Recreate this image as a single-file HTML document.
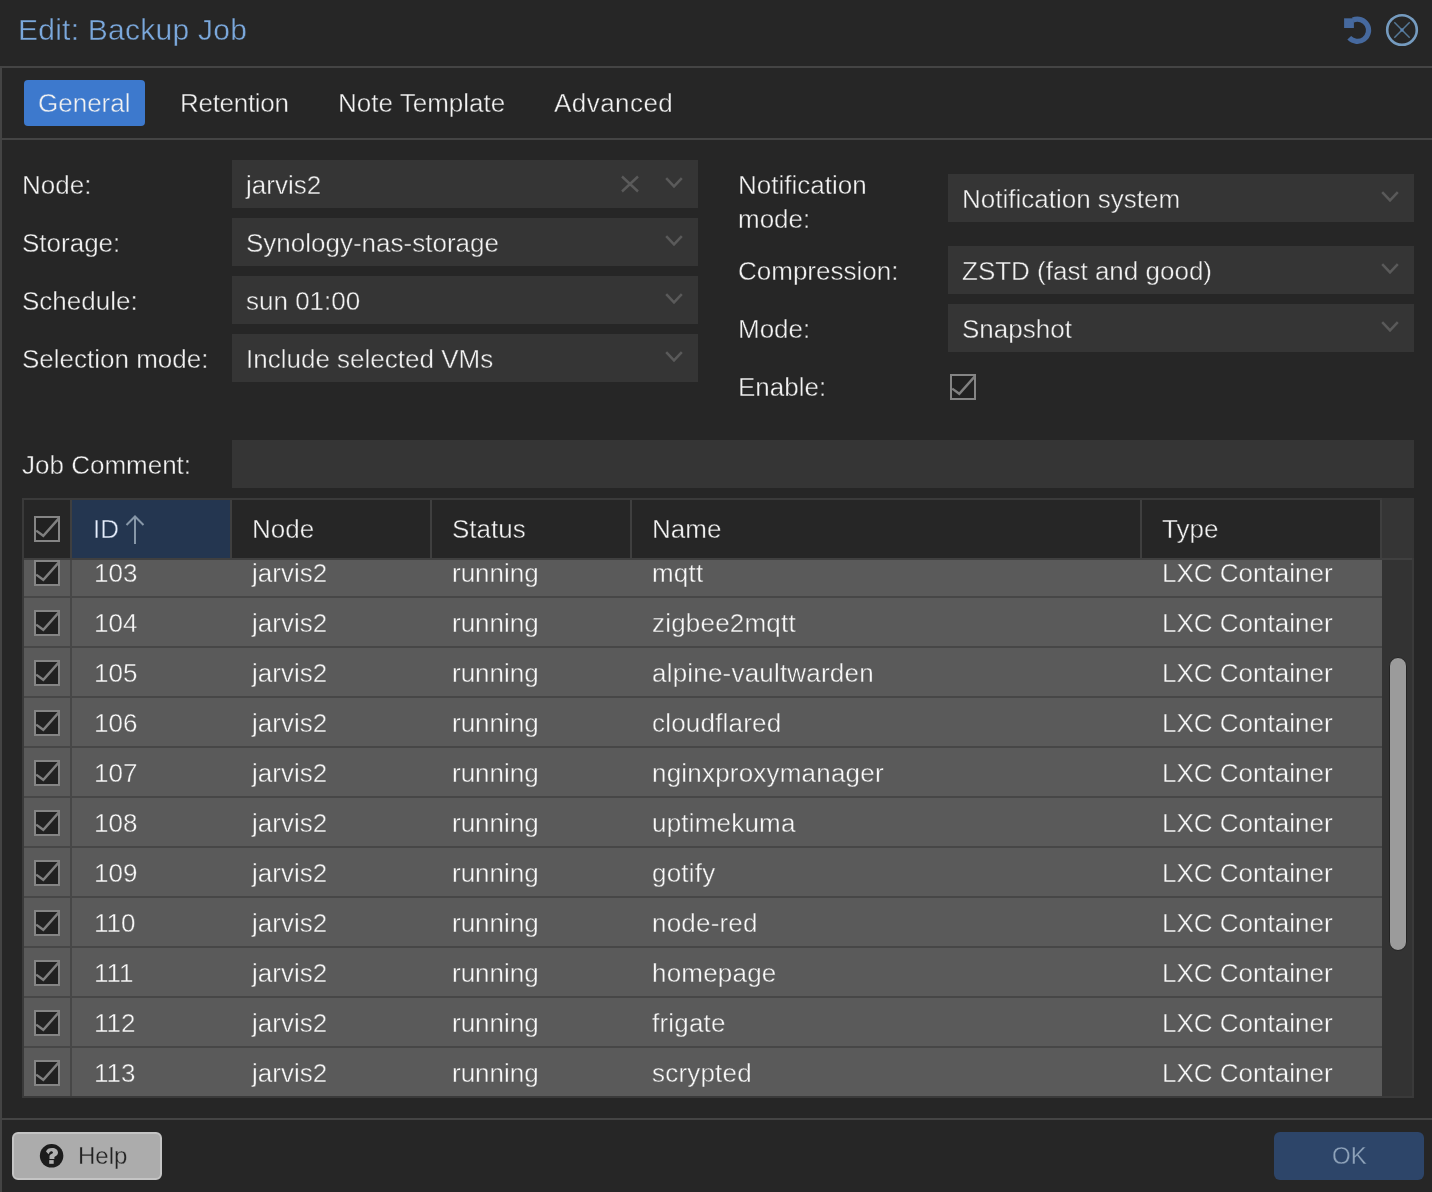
<!DOCTYPE html>
<html><head><meta charset="utf-8"><style>
html,body{margin:0;padding:0;}
body{width:1432px;height:1192px;overflow:hidden;background:#262626;position:relative;font-family:"Liberation Sans",sans-serif;color:#f2f2f2;}
.t{position:absolute;white-space:nowrap;will-change:transform;}
.b{position:absolute;}
.fld{position:absolute;background:#353535;}
svg{display:block;}
</style></head><body>

<div class="t" style="left:18px;top:13px;font-size:30px;line-height:34px;color:#7ba8dc;-webkit-text-stroke:0.4px #262626;letter-spacing:0.25px;">Edit: Backup Job</div>
<svg class="b" style="left:1340px;top:12px" width="36" height="36" viewBox="0 0 36 36"><path d="M13.04 7.99 A 11.15 11.15 0 1 1 9.25 25.85" fill="none" stroke="#46699e" stroke-width="5.2"/><polygon points="4.1,6.3 13.9,6.3 13.9,16 4.1,16" fill="#46699e"/></svg>
<svg class="b" style="left:1384px;top:12px" width="36" height="36" viewBox="0 0 36 36"><circle cx="18" cy="18" r="14.8" fill="none" stroke="#759bbf" stroke-width="2.6"/><path d="M10.3 10.3 L25.7 25.7 M25.7 10.3 L10.3 25.7" stroke="#557896" stroke-width="1.5"/><rect x="16.5" y="16.5" width="3" height="3" fill="#5a84b3"/></svg>
<div class="b" style="left:0;top:66px;width:1432px;height:2px;background:#444"></div>
<div class="b" style="left:0;top:66px;width:2px;height:1126px;background:#444"></div>
<div class="b" style="left:2px;top:138px;width:1430px;height:2px;background:#444"></div>
<div class="b" style="left:2px;top:1118px;width:1430px;height:2px;background:#444"></div>
<div class="b" style="left:24px;top:80px;width:121px;height:46px;background:#3d79cd;border-radius:4px"></div>
<div class="t" style="left:38px;top:88px;font-size:26px;line-height:30px;color:#f2f2f2;-webkit-text-stroke:0.4px #3d79cd;">General</div>
<div class="t" style="left:180px;top:88px;font-size:26px;line-height:30px;color:#f2f2f2;-webkit-text-stroke:0.4px #262626;letter-spacing:-0.3px;">Retention</div>
<div class="t" style="left:338px;top:88px;font-size:26px;line-height:30px;color:#f2f2f2;-webkit-text-stroke:0.4px #262626;">Note Template</div>
<div class="t" style="left:554px;top:88px;font-size:26px;line-height:30px;color:#f2f2f2;-webkit-text-stroke:0.4px #262626;letter-spacing:0.45px;">Advanced</div>
<div class="t" style="left:22px;top:170px;font-size:26px;line-height:30px;-webkit-text-stroke:0.4px #262626;">Node:</div>
<div class="fld" style="left:232px;top:160px;width:466px;height:48px"></div>
<div class="t" style="left:246px;top:170px;font-size:26px;line-height:30px;-webkit-text-stroke:0.4px #353535;">jarvis2</div>
<div class="b" style="left:665px;top:177px"><svg width="18" height="12" viewBox="0 0 18 12"><polyline points="1.2,1.2 9,9.4 16.8,1.2" fill="none" stroke="#5a5a5a" stroke-width="2.5"/></svg></div>
<div class="t" style="left:22px;top:228px;font-size:26px;line-height:30px;-webkit-text-stroke:0.4px #262626;">Storage:</div>
<div class="fld" style="left:232px;top:218px;width:466px;height:48px"></div>
<div class="t" style="left:246px;top:228px;font-size:26px;line-height:30px;-webkit-text-stroke:0.4px #353535;">Synology-nas-storage</div>
<div class="b" style="left:665px;top:235px"><svg width="18" height="12" viewBox="0 0 18 12"><polyline points="1.2,1.2 9,9.4 16.8,1.2" fill="none" stroke="#5a5a5a" stroke-width="2.5"/></svg></div>
<div class="t" style="left:22px;top:286px;font-size:26px;line-height:30px;-webkit-text-stroke:0.4px #262626;">Schedule:</div>
<div class="fld" style="left:232px;top:276px;width:466px;height:48px"></div>
<div class="t" style="left:246px;top:286px;font-size:26px;line-height:30px;-webkit-text-stroke:0.4px #353535;">sun 01:00</div>
<div class="b" style="left:665px;top:293px"><svg width="18" height="12" viewBox="0 0 18 12"><polyline points="1.2,1.2 9,9.4 16.8,1.2" fill="none" stroke="#5a5a5a" stroke-width="2.5"/></svg></div>
<div class="t" style="left:22px;top:344px;font-size:26px;line-height:30px;-webkit-text-stroke:0.4px #262626;">Selection mode:</div>
<div class="fld" style="left:232px;top:334px;width:466px;height:48px"></div>
<div class="t" style="left:246px;top:344px;font-size:26px;line-height:30px;-webkit-text-stroke:0.4px #353535;">Include selected VMs</div>
<div class="b" style="left:665px;top:351px"><svg width="18" height="12" viewBox="0 0 18 12"><polyline points="1.2,1.2 9,9.4 16.8,1.2" fill="none" stroke="#5a5a5a" stroke-width="2.5"/></svg></div>
<svg class="b" style="left:620px;top:175px" width="20" height="20" viewBox="0 0 20 20"><path d="M2 1.5 L18 16.5 M18 1.5 L2 16.5" stroke="#5a5a5a" stroke-width="2.4"/></svg>
<div class="t" style="left:738px;top:170px;font-size:26px;line-height:30px;-webkit-text-stroke:0.4px #262626;">Notification</div>
<div class="t" style="left:738px;top:204px;font-size:26px;line-height:30px;-webkit-text-stroke:0.4px #262626;">mode:</div>
<div class="fld" style="left:948px;top:174px;width:466px;height:48px"></div>
<div class="t" style="left:962px;top:184px;font-size:26px;line-height:30px;-webkit-text-stroke:0.4px #353535;">Notification system</div>
<div class="b" style="left:1381px;top:191px"><svg width="18" height="12" viewBox="0 0 18 12"><polyline points="1.2,1.2 9,9.4 16.8,1.2" fill="none" stroke="#5a5a5a" stroke-width="2.5"/></svg></div>
<div class="t" style="left:738px;top:256px;font-size:26px;line-height:30px;-webkit-text-stroke:0.4px #262626;">Compression:</div>
<div class="fld" style="left:948px;top:246px;width:466px;height:48px"></div>
<div class="t" style="left:962px;top:256px;font-size:26px;line-height:30px;-webkit-text-stroke:0.4px #353535;">ZSTD (fast and good)</div>
<div class="b" style="left:1381px;top:263px"><svg width="18" height="12" viewBox="0 0 18 12"><polyline points="1.2,1.2 9,9.4 16.8,1.2" fill="none" stroke="#5a5a5a" stroke-width="2.5"/></svg></div>
<div class="t" style="left:738px;top:314px;font-size:26px;line-height:30px;-webkit-text-stroke:0.4px #262626;">Mode:</div>
<div class="fld" style="left:948px;top:304px;width:466px;height:48px"></div>
<div class="t" style="left:962px;top:314px;font-size:26px;line-height:30px;-webkit-text-stroke:0.4px #353535;">Snapshot</div>
<div class="b" style="left:1381px;top:321px"><svg width="18" height="12" viewBox="0 0 18 12"><polyline points="1.2,1.2 9,9.4 16.8,1.2" fill="none" stroke="#5a5a5a" stroke-width="2.5"/></svg></div>
<div class="t" style="left:738px;top:372px;font-size:26px;line-height:30px;-webkit-text-stroke:0.4px #262626;">Enable:</div>
<div class="b" style="left:950px;top:374px"><svg width="26" height="26" viewBox="0 0 26 26"><rect x="1" y="1" width="24" height="24" fill="#212121" stroke="#858585" stroke-width="2"/><polyline points="2.2,14.6 9.3,19.8 24.6,2.6" fill="none" stroke="#808080" stroke-width="2.4"/></svg></div>
<div class="t" style="left:22px;top:450px;font-size:26px;line-height:30px;-webkit-text-stroke:0.4px #262626;">Job Comment:</div>
<div class="fld" style="left:232px;top:440px;width:1182px;height:48px"></div>
<div class="b" style="left:22px;top:498px;width:1392px;height:600px;background:#3a3a3a"></div>
<div class="b" style="left:24px;top:500px;width:1388px;height:58px;background:#262626"></div>
<div class="b" style="left:72px;top:500px;width:158px;height:58px;background:#243650"></div>
<div class="b" style="left:70px;top:500px;width:2px;height:58px;background:#3f3f3f"></div>
<div class="b" style="left:230px;top:500px;width:2px;height:58px;background:#3f3f3f"></div>
<div class="b" style="left:430px;top:500px;width:2px;height:58px;background:#3f3f3f"></div>
<div class="b" style="left:630px;top:500px;width:2px;height:58px;background:#3f3f3f"></div>
<div class="b" style="left:1140px;top:500px;width:2px;height:58px;background:#3f3f3f"></div>
<div class="b" style="left:1380px;top:500px;width:2px;height:58px;background:#3f3f3f"></div>
<div class="b" style="left:1382px;top:498px;width:32px;height:60px;background:#353535"></div>
<div class="b" style="left:24px;top:558px;width:1388px;height:2px;background:#404040"></div>
<div class="b" style="left:34px;top:516px"><svg width="26" height="26" viewBox="0 0 26 26"><rect x="1" y="1" width="24" height="24" fill="#212121" stroke="#858585" stroke-width="2"/><polyline points="2.2,14.6 9.3,19.8 24.6,2.6" fill="none" stroke="#808080" stroke-width="2.4"/></svg></div>
<div class="t" style="left:93px;top:514px;font-size:26px;line-height:30px;color:#e6eefc;-webkit-text-stroke:0.4px #243650;">ID</div>
<svg class="b" style="left:124px;top:514px" width="22" height="32" viewBox="0 0 22 32"><path d="M11 3 L11 30 M2.5 11 L11 2.5 L19.5 11" fill="none" stroke="#8797a8" stroke-width="2"/></svg>
<div class="t" style="left:252px;top:514px;font-size:26px;line-height:30px;-webkit-text-stroke:0.4px #262626;">Node</div>
<div class="t" style="left:452px;top:514px;font-size:26px;line-height:30px;-webkit-text-stroke:0.4px #262626;">Status</div>
<div class="t" style="left:652px;top:514px;font-size:26px;line-height:30px;-webkit-text-stroke:0.4px #262626;">Name</div>
<div class="t" style="left:1162px;top:514px;font-size:26px;line-height:30px;-webkit-text-stroke:0.4px #262626;">Type</div>
<div class="b" style="left:24px;top:560px;width:1388px;height:536px;overflow:hidden">
<div class="b" style="left:1358px;top:0;width:30px;height:536px;background:#333"></div>
<div class="b" style="left:0;top:-12px;width:1358px;height:48px;background:#5a5a5a"></div>
<div class="b" style="left:0;top:36px;width:1358px;height:2px;background:#474747"></div>
<div class="b" style="left:46px;top:-12px;width:2px;height:48px;background:#474747"></div>
<div class="b" style="left:10px;top:0px"><svg width="26" height="26" viewBox="0 0 26 26"><rect x="1" y="1" width="24" height="24" fill="#212121" stroke="#858585" stroke-width="2"/><polyline points="2.2,14.6 9.3,19.8 24.6,2.6" fill="none" stroke="#808080" stroke-width="2.4"/></svg></div>
<div class="t" style="left:70px;top:-2px;font-size:26px;line-height:30px;color:#f8f8f8;-webkit-text-stroke:0.4px #5a5a5a;">103</div>
<div class="t" style="left:228px;top:-2px;font-size:26px;line-height:30px;color:#f8f8f8;-webkit-text-stroke:0.4px #5a5a5a;">jarvis2</div>
<div class="t" style="left:428px;top:-2px;font-size:26px;line-height:30px;color:#f8f8f8;-webkit-text-stroke:0.4px #5a5a5a;">running</div>
<div class="t" style="left:628px;top:-2px;font-size:26px;line-height:30px;color:#f8f8f8;-webkit-text-stroke:0.4px #5a5a5a;letter-spacing:0.2px;">mqtt</div>
<div class="t" style="left:1138px;top:-2px;font-size:26px;line-height:30px;color:#f8f8f8;-webkit-text-stroke:0.4px #5a5a5a;">LXC Container</div>
<div class="b" style="left:0;top:38px;width:1358px;height:48px;background:#5a5a5a"></div>
<div class="b" style="left:0;top:86px;width:1358px;height:2px;background:#474747"></div>
<div class="b" style="left:46px;top:38px;width:2px;height:48px;background:#474747"></div>
<div class="b" style="left:10px;top:50px"><svg width="26" height="26" viewBox="0 0 26 26"><rect x="1" y="1" width="24" height="24" fill="#212121" stroke="#858585" stroke-width="2"/><polyline points="2.2,14.6 9.3,19.8 24.6,2.6" fill="none" stroke="#808080" stroke-width="2.4"/></svg></div>
<div class="t" style="left:70px;top:48px;font-size:26px;line-height:30px;color:#f8f8f8;-webkit-text-stroke:0.4px #5a5a5a;">104</div>
<div class="t" style="left:228px;top:48px;font-size:26px;line-height:30px;color:#f8f8f8;-webkit-text-stroke:0.4px #5a5a5a;">jarvis2</div>
<div class="t" style="left:428px;top:48px;font-size:26px;line-height:30px;color:#f8f8f8;-webkit-text-stroke:0.4px #5a5a5a;">running</div>
<div class="t" style="left:628px;top:48px;font-size:26px;line-height:30px;color:#f8f8f8;-webkit-text-stroke:0.4px #5a5a5a;letter-spacing:0.2px;">zigbee2mqtt</div>
<div class="t" style="left:1138px;top:48px;font-size:26px;line-height:30px;color:#f8f8f8;-webkit-text-stroke:0.4px #5a5a5a;">LXC Container</div>
<div class="b" style="left:0;top:88px;width:1358px;height:48px;background:#5a5a5a"></div>
<div class="b" style="left:0;top:136px;width:1358px;height:2px;background:#474747"></div>
<div class="b" style="left:46px;top:88px;width:2px;height:48px;background:#474747"></div>
<div class="b" style="left:10px;top:100px"><svg width="26" height="26" viewBox="0 0 26 26"><rect x="1" y="1" width="24" height="24" fill="#212121" stroke="#858585" stroke-width="2"/><polyline points="2.2,14.6 9.3,19.8 24.6,2.6" fill="none" stroke="#808080" stroke-width="2.4"/></svg></div>
<div class="t" style="left:70px;top:98px;font-size:26px;line-height:30px;color:#f8f8f8;-webkit-text-stroke:0.4px #5a5a5a;">105</div>
<div class="t" style="left:228px;top:98px;font-size:26px;line-height:30px;color:#f8f8f8;-webkit-text-stroke:0.4px #5a5a5a;">jarvis2</div>
<div class="t" style="left:428px;top:98px;font-size:26px;line-height:30px;color:#f8f8f8;-webkit-text-stroke:0.4px #5a5a5a;">running</div>
<div class="t" style="left:628px;top:98px;font-size:26px;line-height:30px;color:#f8f8f8;-webkit-text-stroke:0.4px #5a5a5a;letter-spacing:0.2px;">alpine-vaultwarden</div>
<div class="t" style="left:1138px;top:98px;font-size:26px;line-height:30px;color:#f8f8f8;-webkit-text-stroke:0.4px #5a5a5a;">LXC Container</div>
<div class="b" style="left:0;top:138px;width:1358px;height:48px;background:#5a5a5a"></div>
<div class="b" style="left:0;top:186px;width:1358px;height:2px;background:#474747"></div>
<div class="b" style="left:46px;top:138px;width:2px;height:48px;background:#474747"></div>
<div class="b" style="left:10px;top:150px"><svg width="26" height="26" viewBox="0 0 26 26"><rect x="1" y="1" width="24" height="24" fill="#212121" stroke="#858585" stroke-width="2"/><polyline points="2.2,14.6 9.3,19.8 24.6,2.6" fill="none" stroke="#808080" stroke-width="2.4"/></svg></div>
<div class="t" style="left:70px;top:148px;font-size:26px;line-height:30px;color:#f8f8f8;-webkit-text-stroke:0.4px #5a5a5a;">106</div>
<div class="t" style="left:228px;top:148px;font-size:26px;line-height:30px;color:#f8f8f8;-webkit-text-stroke:0.4px #5a5a5a;">jarvis2</div>
<div class="t" style="left:428px;top:148px;font-size:26px;line-height:30px;color:#f8f8f8;-webkit-text-stroke:0.4px #5a5a5a;">running</div>
<div class="t" style="left:628px;top:148px;font-size:26px;line-height:30px;color:#f8f8f8;-webkit-text-stroke:0.4px #5a5a5a;letter-spacing:0.2px;">cloudflared</div>
<div class="t" style="left:1138px;top:148px;font-size:26px;line-height:30px;color:#f8f8f8;-webkit-text-stroke:0.4px #5a5a5a;">LXC Container</div>
<div class="b" style="left:0;top:188px;width:1358px;height:48px;background:#5a5a5a"></div>
<div class="b" style="left:0;top:236px;width:1358px;height:2px;background:#474747"></div>
<div class="b" style="left:46px;top:188px;width:2px;height:48px;background:#474747"></div>
<div class="b" style="left:10px;top:200px"><svg width="26" height="26" viewBox="0 0 26 26"><rect x="1" y="1" width="24" height="24" fill="#212121" stroke="#858585" stroke-width="2"/><polyline points="2.2,14.6 9.3,19.8 24.6,2.6" fill="none" stroke="#808080" stroke-width="2.4"/></svg></div>
<div class="t" style="left:70px;top:198px;font-size:26px;line-height:30px;color:#f8f8f8;-webkit-text-stroke:0.4px #5a5a5a;">107</div>
<div class="t" style="left:228px;top:198px;font-size:26px;line-height:30px;color:#f8f8f8;-webkit-text-stroke:0.4px #5a5a5a;">jarvis2</div>
<div class="t" style="left:428px;top:198px;font-size:26px;line-height:30px;color:#f8f8f8;-webkit-text-stroke:0.4px #5a5a5a;">running</div>
<div class="t" style="left:628px;top:198px;font-size:26px;line-height:30px;color:#f8f8f8;-webkit-text-stroke:0.4px #5a5a5a;letter-spacing:0.2px;">nginxproxymanager</div>
<div class="t" style="left:1138px;top:198px;font-size:26px;line-height:30px;color:#f8f8f8;-webkit-text-stroke:0.4px #5a5a5a;">LXC Container</div>
<div class="b" style="left:0;top:238px;width:1358px;height:48px;background:#5a5a5a"></div>
<div class="b" style="left:0;top:286px;width:1358px;height:2px;background:#474747"></div>
<div class="b" style="left:46px;top:238px;width:2px;height:48px;background:#474747"></div>
<div class="b" style="left:10px;top:250px"><svg width="26" height="26" viewBox="0 0 26 26"><rect x="1" y="1" width="24" height="24" fill="#212121" stroke="#858585" stroke-width="2"/><polyline points="2.2,14.6 9.3,19.8 24.6,2.6" fill="none" stroke="#808080" stroke-width="2.4"/></svg></div>
<div class="t" style="left:70px;top:248px;font-size:26px;line-height:30px;color:#f8f8f8;-webkit-text-stroke:0.4px #5a5a5a;">108</div>
<div class="t" style="left:228px;top:248px;font-size:26px;line-height:30px;color:#f8f8f8;-webkit-text-stroke:0.4px #5a5a5a;">jarvis2</div>
<div class="t" style="left:428px;top:248px;font-size:26px;line-height:30px;color:#f8f8f8;-webkit-text-stroke:0.4px #5a5a5a;">running</div>
<div class="t" style="left:628px;top:248px;font-size:26px;line-height:30px;color:#f8f8f8;-webkit-text-stroke:0.4px #5a5a5a;letter-spacing:0.2px;">uptimekuma</div>
<div class="t" style="left:1138px;top:248px;font-size:26px;line-height:30px;color:#f8f8f8;-webkit-text-stroke:0.4px #5a5a5a;">LXC Container</div>
<div class="b" style="left:0;top:288px;width:1358px;height:48px;background:#5a5a5a"></div>
<div class="b" style="left:0;top:336px;width:1358px;height:2px;background:#474747"></div>
<div class="b" style="left:46px;top:288px;width:2px;height:48px;background:#474747"></div>
<div class="b" style="left:10px;top:300px"><svg width="26" height="26" viewBox="0 0 26 26"><rect x="1" y="1" width="24" height="24" fill="#212121" stroke="#858585" stroke-width="2"/><polyline points="2.2,14.6 9.3,19.8 24.6,2.6" fill="none" stroke="#808080" stroke-width="2.4"/></svg></div>
<div class="t" style="left:70px;top:298px;font-size:26px;line-height:30px;color:#f8f8f8;-webkit-text-stroke:0.4px #5a5a5a;">109</div>
<div class="t" style="left:228px;top:298px;font-size:26px;line-height:30px;color:#f8f8f8;-webkit-text-stroke:0.4px #5a5a5a;">jarvis2</div>
<div class="t" style="left:428px;top:298px;font-size:26px;line-height:30px;color:#f8f8f8;-webkit-text-stroke:0.4px #5a5a5a;">running</div>
<div class="t" style="left:628px;top:298px;font-size:26px;line-height:30px;color:#f8f8f8;-webkit-text-stroke:0.4px #5a5a5a;letter-spacing:0.2px;">gotify</div>
<div class="t" style="left:1138px;top:298px;font-size:26px;line-height:30px;color:#f8f8f8;-webkit-text-stroke:0.4px #5a5a5a;">LXC Container</div>
<div class="b" style="left:0;top:338px;width:1358px;height:48px;background:#5a5a5a"></div>
<div class="b" style="left:0;top:386px;width:1358px;height:2px;background:#474747"></div>
<div class="b" style="left:46px;top:338px;width:2px;height:48px;background:#474747"></div>
<div class="b" style="left:10px;top:350px"><svg width="26" height="26" viewBox="0 0 26 26"><rect x="1" y="1" width="24" height="24" fill="#212121" stroke="#858585" stroke-width="2"/><polyline points="2.2,14.6 9.3,19.8 24.6,2.6" fill="none" stroke="#808080" stroke-width="2.4"/></svg></div>
<div class="t" style="left:70px;top:348px;font-size:26px;line-height:30px;color:#f8f8f8;-webkit-text-stroke:0.4px #5a5a5a;">110</div>
<div class="t" style="left:228px;top:348px;font-size:26px;line-height:30px;color:#f8f8f8;-webkit-text-stroke:0.4px #5a5a5a;">jarvis2</div>
<div class="t" style="left:428px;top:348px;font-size:26px;line-height:30px;color:#f8f8f8;-webkit-text-stroke:0.4px #5a5a5a;">running</div>
<div class="t" style="left:628px;top:348px;font-size:26px;line-height:30px;color:#f8f8f8;-webkit-text-stroke:0.4px #5a5a5a;letter-spacing:0.2px;">node-red</div>
<div class="t" style="left:1138px;top:348px;font-size:26px;line-height:30px;color:#f8f8f8;-webkit-text-stroke:0.4px #5a5a5a;">LXC Container</div>
<div class="b" style="left:0;top:388px;width:1358px;height:48px;background:#5a5a5a"></div>
<div class="b" style="left:0;top:436px;width:1358px;height:2px;background:#474747"></div>
<div class="b" style="left:46px;top:388px;width:2px;height:48px;background:#474747"></div>
<div class="b" style="left:10px;top:400px"><svg width="26" height="26" viewBox="0 0 26 26"><rect x="1" y="1" width="24" height="24" fill="#212121" stroke="#858585" stroke-width="2"/><polyline points="2.2,14.6 9.3,19.8 24.6,2.6" fill="none" stroke="#808080" stroke-width="2.4"/></svg></div>
<div class="t" style="left:70px;top:398px;font-size:26px;line-height:30px;color:#f8f8f8;-webkit-text-stroke:0.4px #5a5a5a;">111</div>
<div class="t" style="left:228px;top:398px;font-size:26px;line-height:30px;color:#f8f8f8;-webkit-text-stroke:0.4px #5a5a5a;">jarvis2</div>
<div class="t" style="left:428px;top:398px;font-size:26px;line-height:30px;color:#f8f8f8;-webkit-text-stroke:0.4px #5a5a5a;">running</div>
<div class="t" style="left:628px;top:398px;font-size:26px;line-height:30px;color:#f8f8f8;-webkit-text-stroke:0.4px #5a5a5a;letter-spacing:0.2px;">homepage</div>
<div class="t" style="left:1138px;top:398px;font-size:26px;line-height:30px;color:#f8f8f8;-webkit-text-stroke:0.4px #5a5a5a;">LXC Container</div>
<div class="b" style="left:0;top:438px;width:1358px;height:48px;background:#5a5a5a"></div>
<div class="b" style="left:0;top:486px;width:1358px;height:2px;background:#474747"></div>
<div class="b" style="left:46px;top:438px;width:2px;height:48px;background:#474747"></div>
<div class="b" style="left:10px;top:450px"><svg width="26" height="26" viewBox="0 0 26 26"><rect x="1" y="1" width="24" height="24" fill="#212121" stroke="#858585" stroke-width="2"/><polyline points="2.2,14.6 9.3,19.8 24.6,2.6" fill="none" stroke="#808080" stroke-width="2.4"/></svg></div>
<div class="t" style="left:70px;top:448px;font-size:26px;line-height:30px;color:#f8f8f8;-webkit-text-stroke:0.4px #5a5a5a;">112</div>
<div class="t" style="left:228px;top:448px;font-size:26px;line-height:30px;color:#f8f8f8;-webkit-text-stroke:0.4px #5a5a5a;">jarvis2</div>
<div class="t" style="left:428px;top:448px;font-size:26px;line-height:30px;color:#f8f8f8;-webkit-text-stroke:0.4px #5a5a5a;">running</div>
<div class="t" style="left:628px;top:448px;font-size:26px;line-height:30px;color:#f8f8f8;-webkit-text-stroke:0.4px #5a5a5a;letter-spacing:0.2px;">frigate</div>
<div class="t" style="left:1138px;top:448px;font-size:26px;line-height:30px;color:#f8f8f8;-webkit-text-stroke:0.4px #5a5a5a;">LXC Container</div>
<div class="b" style="left:0;top:488px;width:1358px;height:48px;background:#5a5a5a"></div>
<div class="b" style="left:0;top:536px;width:1358px;height:2px;background:#474747"></div>
<div class="b" style="left:46px;top:488px;width:2px;height:48px;background:#474747"></div>
<div class="b" style="left:10px;top:500px"><svg width="26" height="26" viewBox="0 0 26 26"><rect x="1" y="1" width="24" height="24" fill="#212121" stroke="#858585" stroke-width="2"/><polyline points="2.2,14.6 9.3,19.8 24.6,2.6" fill="none" stroke="#808080" stroke-width="2.4"/></svg></div>
<div class="t" style="left:70px;top:498px;font-size:26px;line-height:30px;color:#f8f8f8;-webkit-text-stroke:0.4px #5a5a5a;">113</div>
<div class="t" style="left:228px;top:498px;font-size:26px;line-height:30px;color:#f8f8f8;-webkit-text-stroke:0.4px #5a5a5a;">jarvis2</div>
<div class="t" style="left:428px;top:498px;font-size:26px;line-height:30px;color:#f8f8f8;-webkit-text-stroke:0.4px #5a5a5a;">running</div>
<div class="t" style="left:628px;top:498px;font-size:26px;line-height:30px;color:#f8f8f8;-webkit-text-stroke:0.4px #5a5a5a;letter-spacing:0.2px;">scrypted</div>
<div class="t" style="left:1138px;top:498px;font-size:26px;line-height:30px;color:#f8f8f8;-webkit-text-stroke:0.4px #5a5a5a;">LXC Container</div>
<div class="b" style="left:1365px;top:97px;width:16px;height:292px;background:#9b9b9b;border:1px solid #232323;border-radius:9px"></div>
</div>
<div class="b" style="left:12px;top:1132px;width:146px;height:44px;background:#acacac;border:2px solid #c4c4c4;border-radius:6px"></div>
<svg class="b" style="left:38px;top:1142px" width="28" height="28" viewBox="0 0 28 28"><circle cx="13.6" cy="13.85" r="11.75" fill="#1c1c1c"/><path d="M8 9.4 C8.9 7 11 5.9 14 5.9 C17.6 5.9 20 7.9 20 10.6 C20 12.9 18.5 14 16.4 15 L16.4 17 L11.5 17 L11.5 14.2 C11.5 13 12.6 12.3 13.8 11.7 C14.6 11.3 15 11 15 10.5 C15 9.8 14.2 9.2 13.3 9.2 C12.2 9.2 11.4 10.4 10.6 12.2 Z" fill="#b0b0b0"/><rect x="11.2" y="18.1" width="4.5" height="3.7" fill="#b0b0b0"/></svg>
<div class="t" style="left:78px;top:1142px;font-size:24px;line-height:28px;color:#222;-webkit-text-stroke:0.3px #acacac;">Help</div>
<div class="b" style="left:1274px;top:1132px;width:150px;height:48px;background:#2d4569;border-radius:6px"></div>
<div class="t" style="left:1332px;top:1142px;font-size:24px;line-height:28px;color:#8ea2b9;-webkit-text-stroke:0.3px #2d4569;">OK</div>
</body></html>
